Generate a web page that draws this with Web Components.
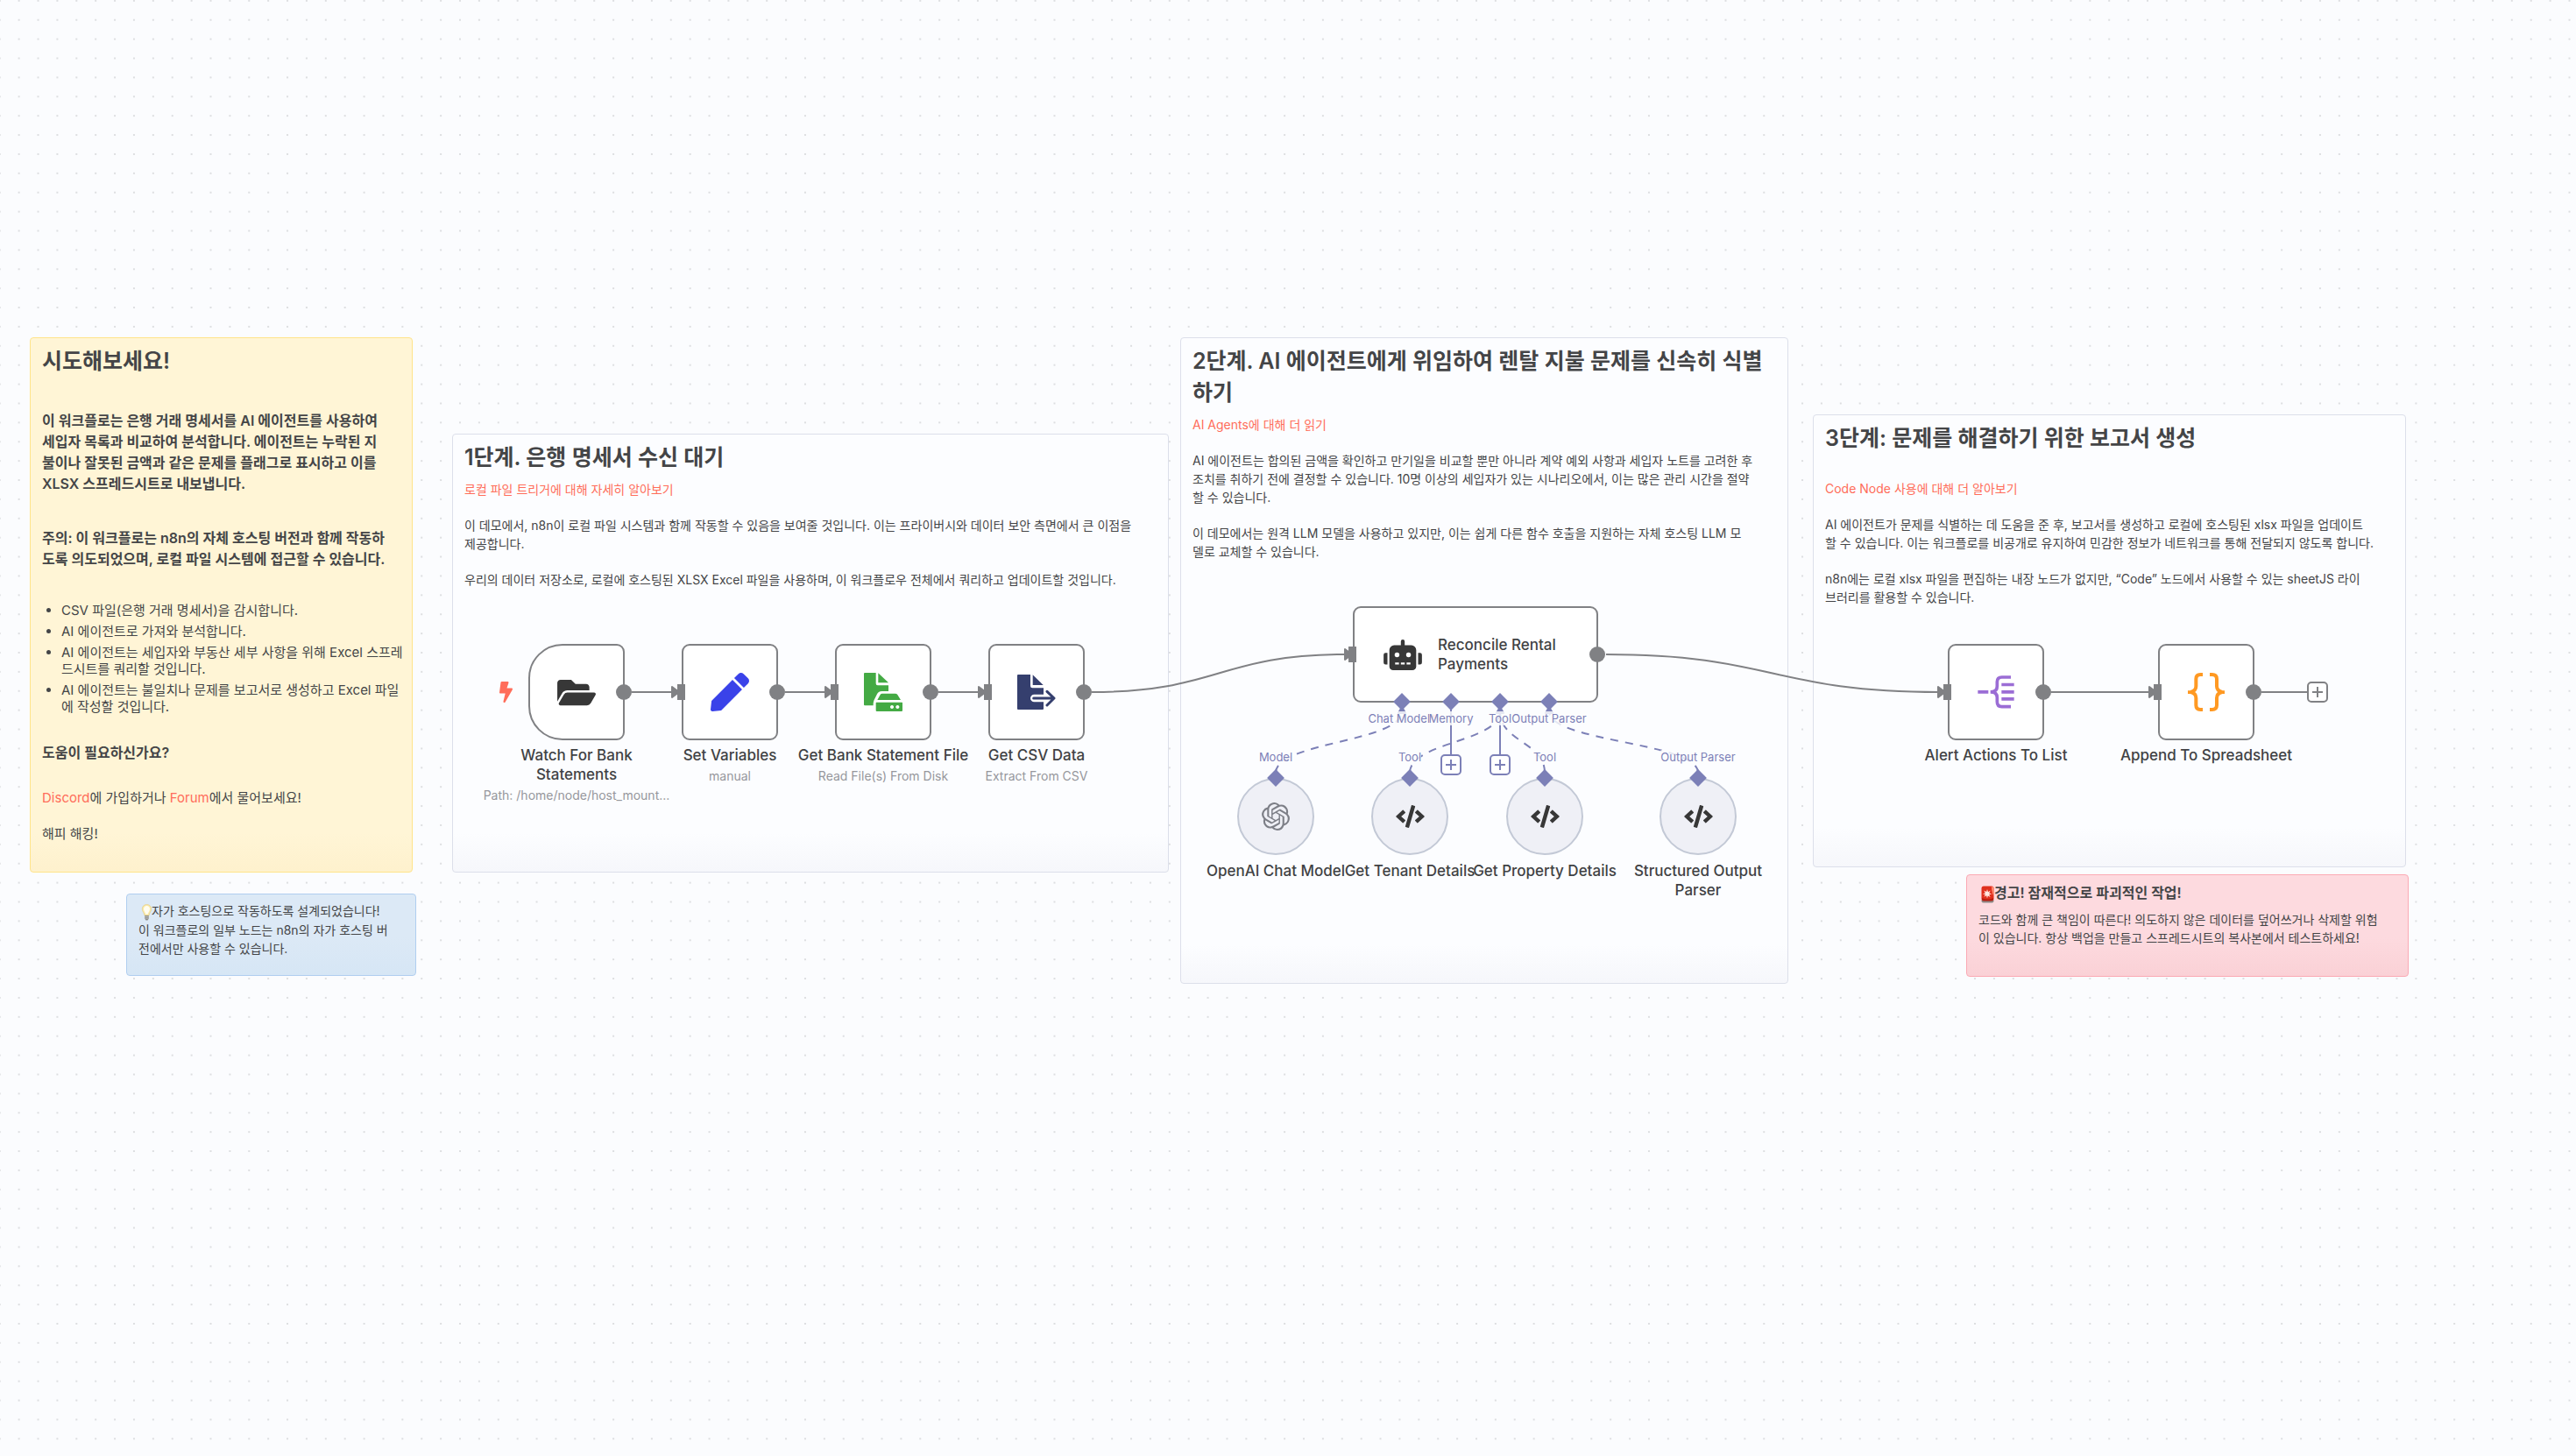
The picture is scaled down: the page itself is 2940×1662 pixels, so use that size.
<!DOCTYPE html>
<html lang="ko">
<head>
<meta charset="utf-8">
<meta name="viewport" content="width=device-width, initial-scale=1">
<title>Workflow</title>
<style>
  html, body { margin: 0; min-height: 100%; }
  body {
    background: #fbfcfe;
    color: #444547;
    font-family: Inter, "Noto Sans CJK KR", sans-serif;
    font-size: 14px;
  }
  sticky-note h1, sticky-note h2, sticky-note p, sticky-note ul { margin: 0; white-space: nowrap; }
  sticky-note h1 { font-size: 25px; line-height: 36px; font-weight: 600; }
  sticky-note h2 { font-size: 16px; line-height: 24px; font-weight: 600; }
  sticky-note p { line-height: 21px; }
  sticky-note ul { padding-left: 22px; line-height: 19px; display: grid; gap: 5px; }
  sticky-note[tone=yellow] { font-size: 15px; }
  sticky-note h1 + p { margin-top: 8px; }
  sticky-note h2 + p { margin-top: 8px; }
  sticky-note p + p { margin-top: 20px; }
  sticky-note.roomy h1 + h2, sticky-note.roomy h2 + h2 { margin-top: 38px; }
  sticky-note.roomy h2 + ul { margin-top: 37px; }
  sticky-note.roomy ul + h2 { margin-top: 31px; }
  sticky-note.roomy h2 + p, sticky-note.roomy h1 + p { margin-top: 29px; }
  sticky-note a { color: #ff6d5a; text-decoration: none; }
</style>
</head>
<body>

<flow-canvas>
  <sticky-note class="roomy" tone="yellow" style="--x:34px;--y:385px;--w:437px;--h:611px">
    <h1>시도해보세요!</h1>
    <h2>이 워크플로는 은행 거래 명세서를 AI 에이전트를 사용하여<br>세입자 목록과 비교하여 분석합니다. 에이전트는 누락된 지<br>불이나 잘못된 금액과 같은 문제를 플래그로 표시하고 이를<br>XLSX 스프레드시트로 내보냅니다.</h2>
    <h2>주의: 이 워크플로는 n8n의 자체 호스팅 버전과 함께 작동하<br>도록 의도되었으며, 로컬 파일 시스템에 접근할 수 있습니다.</h2>
    <ul>
      <li>CSV 파일(은행 거래 명세서)을 감시합니다.</li>
      <li>AI 에이전트로 가져와 분석합니다.</li>
      <li>AI 에이전트는 세입자와 부동산 세부 사항을 위해 Excel 스프레<br>드시트를 쿼리할 것입니다.</li>
      <li>AI 에이전트는 불일치나 문제를 보고서로 생성하고 Excel 파일<br>에 작성할 것입니다.</li>
    </ul>
    <h2>도움이 필요하신가요?</h2>
    <p><a href="#discord">Discord</a>에 가입하거나 <a href="#forum">Forum</a>에서 물어보세요!</p>
    <p>해피 해킹!</p>
  </sticky-note>

  <sticky-note tone="blue" style="--x:144px;--y:1020px;--w:331px;--h:94px">
    <p><flow-icon name="bulb"></flow-icon>자가 호스팅으로 작동하도록 설계되었습니다!<br>이 워크플로의 일부 노드는 n8n의 자가 호스팅 버<br>전에서만 사용할 수 있습니다.</p>
  </sticky-note>

  <sticky-note style="--x:516px;--y:495px;--w:818px;--h:501px">
    <h1>1단계. 은행 명세서 수신 대기</h1>
    <p><a href="#trigger">로컬 파일 트리거에 대해 자세히 알아보기</a></p>
    <p>이 데모에서, n8n이 로컬 파일 시스템과 함께 작동할 수 있음을 보여줄 것입니다. 이는 프라이버시와 데이터 보안 측면에서 큰 이점을<br>제공합니다.</p>
    <p>우리의 데이터 저장소로, 로컬에 호스팅된 XLSX Excel 파일을 사용하며, 이 워크플로우 전체에서 쿼리하고 업데이트할 것입니다.</p>
  </sticky-note>

  <sticky-note style="--x:1347px;--y:385px;--w:694px;--h:738px">
    <h1>2단계. AI 에이전트에게 위임하여 렌탈 지불 문제를 신속히 식별<br>하기</h1>
    <p><a href="#agents">AI Agents에 대해 더 읽기</a></p>
    <p>AI 에이전트는 합의된 금액을 확인하고 만기일을 비교할 뿐만 아니라 계약 예외 사항과 세입자 노트를 고려한 후<br>조치를 취하기 전에 결정할 수 있습니다. 10명 이상의 세입자가 있는 시나리오에서, 이는 많은 관리 시간을 절약<br>할 수 있습니다.</p>
    <p>이 데모에서는 원격 LLM 모델을 사용하고 있지만, 이는 쉽게 다른 함수 호출을 지원하는 자체 호스팅 LLM 모<br>델로 교체할 수 있습니다.</p>
  </sticky-note>

  <sticky-note class="roomy" style="--x:2069px;--y:473px;--w:677px;--h:517px">
    <h1>3단계: 문제를 해결하기 위한 보고서 생성</h1>
    <p><a href="#code">Code Node 사용에 대해 더 알아보기</a></p>
    <p>AI 에이전트가 문제를 식별하는 데 도움을 준 후, 보고서를 생성하고 로컬에 호스팅된 xlsx 파일을 업데이트<br>할 수 있습니다. 이는 워크플로를 비공개로 유지하여 민감한 정보가 네트워크를 통해 전달되지 않도록 합니다.</p>
    <p>n8n에는 로컬 xlsx 파일을 편집하는 내장 노드가 없지만, “Code” 노드에서 사용할 수 있는 sheetJS 라이<br>브러리를 활용할 수 있습니다.</p>
  </sticky-note>

  <sticky-note tone="red" style="--x:2244px;--y:998px;--w:505px;--h:117px">
    <h2><flow-icon name="siren"></flow-icon>경고! 잠재적으로 파괴적인 작업!</h2>
    <p>코드와 함께 큰 책임이 따른다! 의도하지 않은 데이터를 덮어쓰거나 삭제할 위험<br>이 있습니다. 항상 백업을 만들고 스프레드시트의 복사본에서 테스트하세요!</p>
  </sticky-note>

  <flow-edges></flow-edges>

  <flow-node trigger icon="folder" label="Watch For Bank Statements" note="Path: /home/node/host_mount..." style="--x:658px;--y:735px"></flow-node>
  <flow-node input icon="pen" label="Set Variables" note="manual" style="--x:833px;--y:735px"></flow-node>
  <flow-node input icon="disk" label="Get Bank Statement File" note="Read File(s) From Disk" style="--x:1008px;--y:735px"></flow-node>
  <flow-node input icon="extract" label="Get CSV Data" note="Extract From CSV" style="--x:1183px;--y:735px"></flow-node>
  <flow-node input icon="split" label="Alert Actions To List" style="--x:2278px;--y:735px"></flow-node>
  <flow-node input icon="braces" label="Append To Spreadsheet" style="--x:2518px;--y:735px"></flow-node>
  <add-button style="--x:2645px;--y:790px;--c:#808184"></add-button>

  <agent-node icon="robot" label="Reconcile Rental Payments" style="--x:1544px;--y:692px"></agent-node>
  <add-button style="--x:1656px;--y:873px"></add-button>
  <add-button style="--x:1712px;--y:873px"></add-button>

  <sub-node icon="openai" port="Model" label="OpenAI Chat Model" style="--x:1456px;--y:854px"></sub-node>
  <sub-node icon="code" port="Tool" label="Get Tenant Details" style="--x:1609px;--y:854px"></sub-node>
  <sub-node icon="code" port="Tool" label="Get Property Details" style="--x:1763px;--y:854px"></sub-node>
  <sub-node icon="code" port="Output Parser" label="Structured Output Parser" style="--x:1938px;--y:854px"></sub-node>
</flow-canvas>

<script>
const ICONS = {
  folder: [44, 39, '0 0 576 512', '#373737', '<path d="M572.694 292.093L500.27 416.248A63.997 63.997 0 0 1 444.989 448H45.025c-18.523 0-30.064-20.093-20.731-36.093l72.424-124.155A64 64 0 0 1 152 256h399.964c18.523 0 30.064 20.093 20.73 36.093zM152 224h328v-48c0-26.51-21.49-48-48-48H272l-64-64H48C21.49 64 0 85.49 0 112v278.046l69.077-118.418C86.214 242.25 117.989 224 152 224z"/>'],
  pen: [44, 44, '0 0 512 512', '#3a42e9', '<path d="M290.74 93.24l128.02 128.02-277.99 277.99-114.14 12.6C11.35 513.54-1.56 500.62.14 485.34l12.7-114.22 277.9-277.88zm207.2-19.06l-60.11-60.11c-18.75-18.75-49.16-18.75-67.91 0l-56.55 56.55 128.02 128.02 56.55-56.55c18.75-18.76 18.75-49.16 0-67.91z"/>'],
  disk: [44, 44, '0 0 132 132', '#44aa44', '<path d="M3 0H41V37q0 6 6 6H84V63H62C52 63 48 67 45 73L36 91Q32 98 32 104V112H3Q0 112 0 109V3Q0 0 3 0Z"/><path d="M49 1L84 34H49Z"/><path d="M63 71H107Q112 71 115 75L126 93H46L56 75Q58 71 63 71Z"/><path fill-rule="evenodd" d="M43 101H130Q132 101 132 103V129Q132 132 129 132H44Q41 132 41 129V103Q41 101 43 101ZM96 111a6 6 0 1 0 .1 0ZM115 111a6 6 0 1 0 .1 0Z"/>'],
  extract: [44, 40, '0 0 132 120', '#353f6e', '<path d="M3 0H45V39q0 7 7 7H90V68H58a13 13 0 0 0 0 26H90V117q0 3-3 3H3q-3 0-3-3V3Q0 0 3 0Z"/><path d="M53 1L89 36H53Z"/><path d="M56 81H124M102 58L126 81L102 105" fill="none" stroke="currentColor" stroke-width="9" stroke-linecap="round" stroke-linejoin="round"/>'],
  split: [42, 38, '194 184 126 114', '#9b6dd5', '<path d="M308 190H277Q261 190 261 206V221Q261 240 241 240.500Q261 241 261 260V274Q261 291 277 291H308" fill="none" stroke="currentColor" stroke-width="11"/><path d="M195 235h36v11h-36zM276 210h43v11h-43zM276 235h43v11h-43zM276 259h43v11h-43zM238 235h14v11h-14z"/>'],
  braces: [42, 44, '920 174 126 132', '#ff9922', '<path d="M971 180H963Q948 180 948 195V220Q948 236 930 240Q948 244 948 260V285Q948 300 963 300H971M995 180H1003Q1019 180 1019 195V220Q1019 236 1037 240Q1019 244 1019 260V285Q1019 300 1003 300H995" fill="none" stroke="currentColor" stroke-width="12"/><path d="M920 235h16v11h-16zM1030 235h16v11h-16z"/>'],
  robot: [44, 35, '0 0 640 512', '#373737', '<path d="M32,224H64V416H32A31.96166,31.96166,0,0,1,0,384V256A31.96166,31.96166,0,0,1,32,224Zm512-48V448a64.06328,64.06328,0,0,1-64,64H160a64.06328,64.06328,0,0,1-64-64V176a79.974,79.974,0,0,1,80-80H288V32a32,32,0,0,1,64,0V96H464A79.974,79.974,0,0,1,544,176ZM264,256a40,40,0,1,0-40,40A39.997,39.997,0,0,0,264,256Zm-8,128H192v32h64Zm96,0H288v32h64ZM456,256a40,40,0,1,0-40,40A39.997,39.997,0,0,0,456,256Zm-8,128H384v32h64ZM640,256V384a31.96166,31.96166,0,0,1-32,32H576V224h32A31.96166,31.96166,0,0,1,640,256Z"/>'],
  code: [33, 26, '0 0 640 512', '#373737', '<path d="M278.9 511.5l-61-17.7c-6.4-1.8-10-8.5-8.2-14.9L346.2 8.7c1.8-6.4 8.5-10 14.9-8.2l61 17.7c6.400 1.800 10 8.500 8.200 14.900L293.800 503.300c-1.900 6.400-8.500 10.100-14.900 8.200zm-114-112.200l43.500-46.400c4.600-4.900 4.300-12.700-.8-17.200L117 256l90.600-79.700c5.100-4.500 5.500-12.300.8-17.200l-43.500-46.400c-4.500-4.800-12.100-5.100-17-.5L3.800 247.200c-5.100 4.700-5.100 12.800 0 17.500l144.100 135.100c4.900 4.600 12.500 4.400 17-.5zm327.200.6l144.100-135.100c5.100-4.700 5.100-12.800 0-17.500L492.100 112.100c-4.800-4.500-12.400-4.300-17 .5L431.600 159c-4.600 4.900-4.300 12.700.8 17.200L523 256l-90.600 79.700c-5.100 4.500-5.500 12.300-.8 17.200l43.500 46.400c4.500 4.900 12.100 5.100 17 .6z"/>'],
  bolt: [15, 24, '0 0 320 512', '#ff6d5a', '<path d="M296 160H180.600l42.600-129.800C227.200 15 215.700 0 200 0H56C44 0 33.800 8.900 32.200 20.800l-32 240C-1.700 275.200 9.500 288 24 288h118.700L96.600 482.500c-3.600 15.200 8 29.500 23.300 29.500 8.400 0 16.400-4.400 20.800-12l176-304c9.300-15.900-2.200-36-20.700-36z"/>'],
  openai: [32, 32, '0 0 24 24', '#7d7f87', '<path d="M22.2819 9.8211a5.9847 5.9847 0 0 0-.5157-4.9108 6.0462 6.0462 0 0 0-6.5098-2.9A6.0651 6.0651 0 0 0 4.9807 4.1818a5.9847 5.9847 0 0 0-3.9977 2.9 6.0462 6.0462 0 0 0 .7427 7.0966 5.98 5.98 0 0 0 .511 4.9107 6.051 6.051 0 0 0 6.5146 2.9001A5.9847 5.9847 0 0 0 13.2599 24a6.0557 6.0557 0 0 0 5.7718-4.2058 5.9894 5.9894 0 0 0 3.9977-2.9001 6.0557 6.0557 0 0 0-.7475-7.0729zm-9.022 12.6081a4.4755 4.4755 0 0 1-2.8764-1.0408l.1419-.0804 4.7783-2.7582a.7948.7948 0 0 0 .3927-.6813v-6.7369l2.02 1.1686a.071.071 0 0 1 .038.052v5.5826a4.504 4.504 0 0 1-4.4945 4.4944zm-9.6607-4.1254a4.4708 4.4708 0 0 1-.5346-3.0137l.142.0852 4.783 2.7582a.7712.7712 0 0 0 .7806 0l5.8428-3.3685v2.3324a.0804.0804 0 0 1-.0332.0615L9.74 19.9502a4.4992 4.4992 0 0 1-6.1408-1.6464zM2.3408 7.8956a4.485 4.485 0 0 1 2.3655-1.9728V11.6a.7664.7664 0 0 0 .3879.6765l5.8144 3.3543-2.0201 1.1685a.0757.0757 0 0 1-.071 0l-4.8303-2.7865A4.504 4.504 0 0 1 2.3408 7.872zm16.5963 3.8558L13.1038 8.364 15.1192 7.2a.0757.0757 0 0 1 .071 0l4.8303 2.7913a4.4944 4.4944 0 0 1-.6765 8.1042v-5.6772a.79.79 0 0 0-.407-.667zm2.0107-3.0231l-.142-.0852-4.7735-2.7818a.7759.7759 0 0 0-.7854 0L9.409 9.2297V6.8974a.0662.0662 0 0 1 .0284-.0615l4.8303-2.7866a4.4992 4.4992 0 0 1 6.6802 4.66zM8.3065 12.863l-2.02-1.1638a.0804.0804 0 0 1-.038-.0567V6.0742a4.4992 4.4992 0 0 1 7.3757-3.4537l-.142.0805L8.704 5.459a.7948.7948 0 0 0-.3927.6813zm1.0976-2.3654l2.602-1.4998 2.6069 1.4998v2.9994l-2.5974 1.4997-2.6067-1.4997Z"/>'],
  bulb: [15, 19, '-4 0 15 19', '#f6dd8c', '<path d="M5.500 .5C2.400 .5 .3 2.700 .3 5.600c0 3.200 2.400 4.400 2.700 7.400h5c.3-3 2.700-4.200 2.700-7.400C10.700 2.700 8.600 .5 5.500 .5Z" fill="#fbe9a6" stroke="#e3cf8d" stroke-width=".7"/><path d="M5.500 2C3.500 2 2 3.600 2 5.600c0 2.300 1.600 3.400 2.200 6h2.600C7.400 9 9 7.900 9 5.600 9 3.600 7.500 2 5.500 2Z" fill="#fffdf0"/><path d="M3.200 13h4.600v3.500L6.500 18.500h-2L3.200 16.500Z" fill="#8d8d88"/><path d="M3.200 14.500h4.600M3.200 16.200h4.600" stroke="#c9c9c4" stroke-width=".7"/>'],
  siren: [18, 20, '-3 0 18 20', '#e0301e', '<rect x=".5" y="15" width="14" height="4.500" rx="2" fill="#8e8a88"/><path d="M3 .5h9Q14.500 .5 14.500 3v12q0 2-2 2h-10q-2 0-2-2V3Q.5 .5 3 .5Z"/><path d="M1 14q6.500 3 13 0v1.500q0 2-2 2H3q-2 0-2-2Z" fill="#b81d10"/><path d="M12 1q2 0 2.500 2v9Q12 8 12 1Z" fill="#ff8b70"/><path d="M7 4l1 3.200 2.800-1.800-1.600 3 3.200.8-3.200 1 1.400 2.800-2.800-1.600L7 14.500l-.9-3.200-2.700 1.500 1.400-2.700-3-.8 3-.9-1.500-2.900 2.800 1.600Z" fill="#ffe9e2"/>'],
};

class FlowIcon extends HTMLElement {
  connectedCallback() {
    if (this.shadowRoot) return;
    const [w, h, box, color, body] = ICONS[this.getAttribute('name')];
    this.attachShadow({ mode: 'open' }).innerHTML = `
      <style>:host{display:inline-block;vertical-align:middle;color:${color}} svg{display:block;fill:currentColor}</style>
      <svg width="${w}" height="${h}" viewBox="${box}" aria-hidden="true">${body}</svg>`;
  }
}

class FlowCanvas extends HTMLElement {
  constructor() {
    super();
    this.attachShadow({ mode: 'open' }).innerHTML = `
      <style>
        :host { display: block; position: relative; width: 100%; min-height: 100vh; overflow: hidden; }
        .grid { position: absolute; inset: 0; width: 100%; height: 100%; }
      </style>
      <svg class="grid" aria-hidden="true">
        <defs><pattern id="dots" width="20" height="20" patternUnits="userSpaceOnUse" patternTransform="translate(10.700 11.800) scale(1.0943)">
          <circle cx="10" cy="10" r=".6" fill="#a6a7ab"/></pattern></defs>
        <rect width="100%" height="100%" fill="url(#dots)"/>
      </svg>
      <slot></slot>`;
  }
}

class StickyNote extends HTMLElement {
  constructor() {
    super();
    this.attachShadow({ mode: 'open' }).innerHTML = `
      <style>
        :host {
          --bg: #fcfdff; --line: #dcdfea; --shade: #f6f7fb;
          position: absolute; left: var(--x); top: var(--y);
          width: var(--w); height: var(--h);
          box-sizing: border-box; padding: 8px 13px;
          border: 1px solid var(--line); border-radius: 4px;
          background: linear-gradient(var(--bg) calc(100% - 44px), var(--shade));
        }
        :host([tone=yellow]) { --bg: #fff5d6; --line: #ffe48a; --shade: #fef1cd; }
        :host([tone=blue]) { --bg: #dce9f6; --line: #b0cef0; --shade: #d6e6f5; }
        :host([tone=red]) { --bg: #fddadf; --line: #fba9b4; --shade: #fad1d6; }
      </style><slot></slot>`;
  }
}

const curve = (x1, y1, x2, y2) => `M${x1} ${y1}C${(x1 + x2) / 2} ${y1} ${(x1 + x2) / 2} ${y2} ${x2} ${y2}`;
const drop = (x1, y1, x2, y2) => `M${x1} ${y1}C${x1} ${(y1 + y2) / 2} ${x2} ${(y1 + y2) / 2} ${x2} ${y2}`;

class FlowEdges extends HTMLElement {
  constructor() {
    super();
    const main = [[721, 790, 768, 790], [896, 790, 943, 790], [1071, 790, 1118, 790], [1246, 790, 1536, 747],
      [1833, 747, 2213, 790], [2341, 790, 2454, 790]];
    const sub = [[1456, 882, 1600, 812], [1609, 882, 1712, 812], [1763, 882, 1712, 812], [1938, 882, 1768, 812]];
    this.attachShadow({ mode: 'open' }).innerHTML = `
      <style>
        :host { position: absolute; inset: 0; pointer-events: none; }
        svg { width: 100%; height: 100%; display: block; fill: none; stroke-width: 2; }
        .main { stroke: #808184; } .sub { stroke: #7c80b7; }
        .main .tip { fill: #808184; } .sub .tip { fill: #7c80b7; }
      </style>
      <svg aria-hidden="true">
        <g class="main">
          ${main.map(e => `<path d="${curve(...e)}"/><path class="tip" stroke-linejoin="round" d="M${e[2] - 1} ${e[3] - 6}l8 6-8 6z"/>`).join('')}
          <path d="M2581 790H2634"/>
        </g>
        <g class="sub">
          ${sub.map(e => `<path stroke-dasharray="9 8" d="${drop(...e)}"/>`).join('')}
          <path d="M1656 808V862M1712 808V862"/>
          ${[1600, 1712, 1768].map(x => `<path class="tip" stroke-linejoin="round" d="M${x - 4} 814l4-7 4 7z"/>`).join('')}
        </g>
      </svg>`;
  }
}

const NODE_STYLE = `
  :host { position: absolute; left: var(--x); top: var(--y); display: flex; flex-direction: column; align-items: center; }
  .label { color: #414244; font-size: 17px; line-height: 22px; font-weight: 500; text-align: center; }
  .diamond { position: absolute; width: 14px; height: 14px; background: #7c80b7; rotate: 45deg; }
  .port { color: #7c80b7; font-size: 13px; line-height: 16px; white-space: nowrap; background: #fbfcfed0; border-radius: 2px; }
  .required { color: #ff6d5a; }`;

class FlowNode extends HTMLElement {
  connectedCallback() {
    if (this.shadowRoot) return;
    const get = n => this.getAttribute(n) || '';
    this.attachShadow({ mode: 'open' }).innerHTML = `
      <style>${NODE_STYLE}
        :host { width: 220px; margin-left: -110px; }
        .box { position: relative; width: 110px; height: 110px; box-sizing: border-box; border: 2px solid #808184;
          border-radius: 9px; background: #fff; display: grid; place-items: center; }
        :host([trigger]) .box { border-radius: 39px 9px 9px 39px; }
        .out, .in, .bolt { position: absolute; top: 44px; }
        .out { right: -10px; width: 18px; height: 18px; border-radius: 50%; background: #808184; }
        .in { left: -7px; width: 9px; height: 18px; background: #808184; }
        .bolt { left: -35px; top: 41px; line-height: 0; }
        .label { margin-top: 6px; max-width: 200px; }
        .note { margin-top: 3px; color: #96979c; font-size: 14px; line-height: 20px; white-space: nowrap; }
      </style>
      <div class="box">
        <flow-icon name="${get('icon')}"></flow-icon>
        ${this.hasAttribute('trigger') ? '<span class="bolt"><flow-icon name="bolt"></flow-icon></span>' : ''}
        ${this.hasAttribute('input') ? '<span class="in"></span>' : ''}
        <span class="out"></span>
      </div>
      <div class="label">${get('label')}</div>
      ${get('note') ? `<div class="note">${get('note')}</div>` : ''}`;
  }
}

class AgentNode extends HTMLElement {
  connectedCallback() {
    if (this.shadowRoot) return;
    this.attachShadow({ mode: 'open' }).innerHTML = `
      <style>${NODE_STYLE}
        .box { position: relative; width: 280px; height: 110px; box-sizing: border-box; border: 2px solid #808184;
          border-radius: 9px; background: #fff; display: flex; align-items: center; gap: 18px; padding-left: 33px; }
        .label { text-align: left; width: 150px; }
        .out, .in { position: absolute; top: 44px; height: 18px; background: #808184; }
        .out { right: -10px; width: 18px; border-radius: 50%; }
        .in { left: -7px; width: 9px; }
        .ports { position: absolute; left: 28px; top: 102px; display: grid; grid-template-columns: repeat(4, 56px); justify-items: center; }
        .ports .diamond { position: static; }
        .ports > div { display: flex; flex-direction: column; align-items: center; gap: 4px; width: 0; }
      </style>
      <div class="box">
        <flow-icon name="${this.getAttribute('icon')}"></flow-icon>
        <div class="label">${this.getAttribute('label')}</div>
        <span class="in"></span><span class="out"></span>
      </div>
      <div class="ports">
        ${['Chat Model<span class="required">*</span>', 'Memory', 'Tool', 'Output Parser'].map(p => `<div><span class="diamond"></span><span class="port">${p}</span></div>`).join('')}
      </div>`;
  }
}

class SubNode extends HTMLElement {
  connectedCallback() {
    if (this.shadowRoot) return;
    const get = n => this.getAttribute(n);
    this.attachShadow({ mode: 'open' }).innerHTML = `
      <style>${NODE_STYLE}
        :host { width: 206px; margin-left: -103px; }
        .port { margin: 2px 0 16px; }
        .ring { position: relative; width: 88px; height: 88px; box-sizing: border-box; border: 2px solid #c3c9d6; border-radius: 50%;
          background: #eff0f6; display: grid; place-items: center; }
        .diamond { top: -9px; left: 35px; }
        .label { margin-top: 7px; max-width: 200px; }
      </style>
      <span class="port">${get('port')}</span>
      <div class="ring"><flow-icon name="${get('icon')}"></flow-icon><span class="diamond"></span></div>
      <div class="label">${get('label')}</div>`;
  }
}

class AddButton extends HTMLElement {
  constructor() {
    super();
    this.attachShadow({ mode: 'open' }).innerHTML = `
      <style>
        :host { position: absolute; left: var(--x); top: var(--y); margin: -12px 0 0 -12px; color: var(--c, #7c80b7); }
        button { display: grid; place-items: center; width: 24px; height: 24px; padding: 0; border: 2px solid currentColor;
          border-radius: 5px; background: #fff; color: inherit; }
        svg { display: block; stroke: currentColor; stroke-width: 2; }
      </style>
      <button type="button" aria-label="Add node"><svg width="12" height="12" viewBox="0 0 12 12"><path d="M6 0V12M0 6H12"/></svg></button>`;
  }
}

customElements.define('flow-icon', FlowIcon);
customElements.define('flow-canvas', FlowCanvas);
customElements.define('sticky-note', StickyNote);
customElements.define('flow-edges', FlowEdges);
customElements.define('flow-node', FlowNode);
customElements.define('agent-node', AgentNode);
customElements.define('sub-node', SubNode);
customElements.define('add-button', AddButton);
</script>
</body>
</html>
